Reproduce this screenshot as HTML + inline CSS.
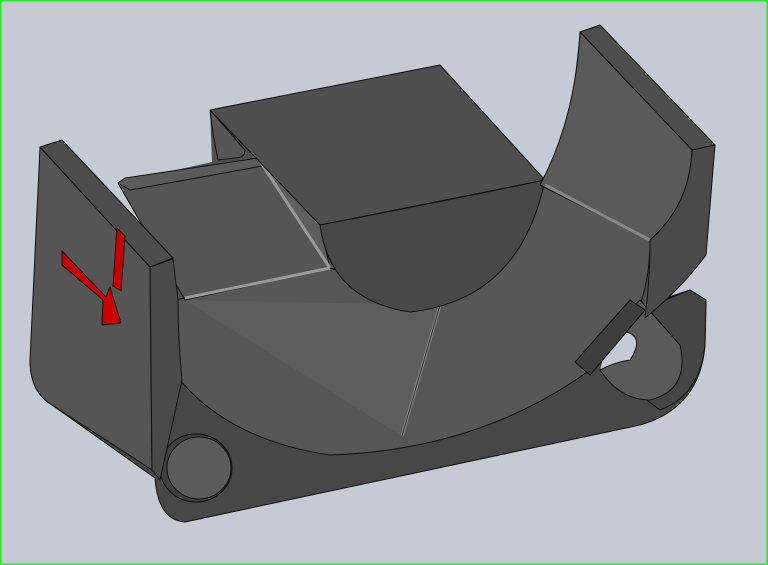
<!DOCTYPE html>
<html><head><style>
html,body{margin:0;padding:0;background:#c5cad5;}
svg{display:block}
</style></head><body>
<svg width="768" height="565" viewBox="0 0 768 565" xmlns="http://www.w3.org/2000/svg" stroke="#111" stroke-width="1" stroke-linejoin="round">
<rect x="0.5" y="0.5" width="767" height="564" fill="#c5cad5" stroke="#22ee22" stroke-width="2"/>
<!-- backing -->
<path d="M150,267 L173,258 L118,183 L212,162 L210,110 L440,65 L545,180 L570,120 L580,32 L715,145 L706,255 L660,300 L690,290 L706,300 L705,345 Q700,408 640,425 L185,522 Q158,520 155,478 L52,405 Q30,392 30,360 L40,147 Z" fill="#505050" stroke="none"/>
<!-- base bottom body -->
<path d="M30,360 Q30,392 52,405 L155,478 Q158,520 185,522 L640,425 Q700,408 705,345 L706,300 L690,290 L660,300 L600,330 L450,300 L180,300 Z" fill="#474747"/>
<path d="M640,310 L690,290 L706,300 L705,345 Q700,395 660,410 L620,380 Z" fill="#454545"/>
<!-- floor -->
<path d="M175,300 L330,268 L440,300 L545,185 L650,240 Q650,330 590,370 Q480,450 330,455 Q230,440 180,380 Z" fill="#575757"/>
<path d="M185,300 L440,305 L400,435 Z" fill="#5d5d5d" stroke="none"/>
<path d="M440,305 L402,436" stroke="#888" stroke-width="3"/>
<path d="M440,305 L402,436" stroke="#222" stroke-width="0.8" fill="none"/>
<!-- right loop cylinder -->
<path d="M610,330 L640,300 L680,345 Q690,390 650,400 Q620,400 600,370 Z" fill="#5a5a5a"/>
<path d="M610,330 Q650,330 630,360 Q615,362 600,370" fill="#c5cad5"/>
<path d="M575,362 L630,300 L645,310 L590,375 Z" fill="#3e3e3e"/>
<!-- left hole -->
<ellipse cx="196" cy="468" rx="36" ry="34" fill="#404040"/>
<ellipse cx="199" cy="468" rx="32" ry="31" fill="#5c5c5c"/>
<!-- left ramp -->
<path d="M118,183 L258,158 L330,268 L185,300 Z" fill="#555"/>
<path d="M258,158 L320,225 L330,268 Z" fill="#5e5e5e"/>
<path d="M118,183 L125,178 L258,158 L268,165 L130,190 Z" fill="#5b5b5b"/>
<path d="M258,158 Q295,215 330,268" stroke="#999" stroke-width="3" fill="none"/>
<path d="M185,298 L330,268" stroke="#999" stroke-width="3" fill="none"/>
<!-- top block -->
<path d="M210,110 L440,65 L545,180 L320,225 Z" fill="#4f4f4f"/>
<path d="M210,110 L245,150 Q245,158 235,158 L218,160 Q212,130 210,110 Z" fill="#565656"/>
<path d="M320,225 Q330,300 410,312 Q520,300 545,180 Q450,200 320,225 Z" fill="#484848"/>
<!-- right wall -->
<path d="M580,32 L600,25 L715,145 L692,150 Z" fill="#4e4e4e"/>
<path d="M580,32 L692,150 Q690,205 650,240 L540,185 Q575,120 580,32 Z" fill="#5a5a5a"/>
<path d="M545,185 L650,240" stroke="#888" stroke-width="3"/>
<path d="M692,150 L715,145 L706,255 Q680,290 645,318 Q650,280 650,240 Q690,205 692,150 Z" fill="#4a4a4a"/>
<!-- left wall -->
<path d="M40,147 L150,267 L152,470 L52,405 Q30,392 30,360 Z" fill="#555"/>
<path d="M40,147 L62,140 L173,258 L150,267 Z" fill="#4d4d4d"/>
<path d="M150,267 L173,259 L178,300 Q178,340 182,380 L160,480 L152,470 Z" fill="#4a4a4a"/>
<!-- red arrows -->
<path d="M62,251 L62,265 L103,300 L102,325 L121,323 L110,287 L106,297 Z" fill="#cc0000" stroke="#111"/>
<path d="M117,228 L125,236 L121,291 L113,286 Z" fill="#cc0000" stroke="#111"/>
</svg>
</body></html>
